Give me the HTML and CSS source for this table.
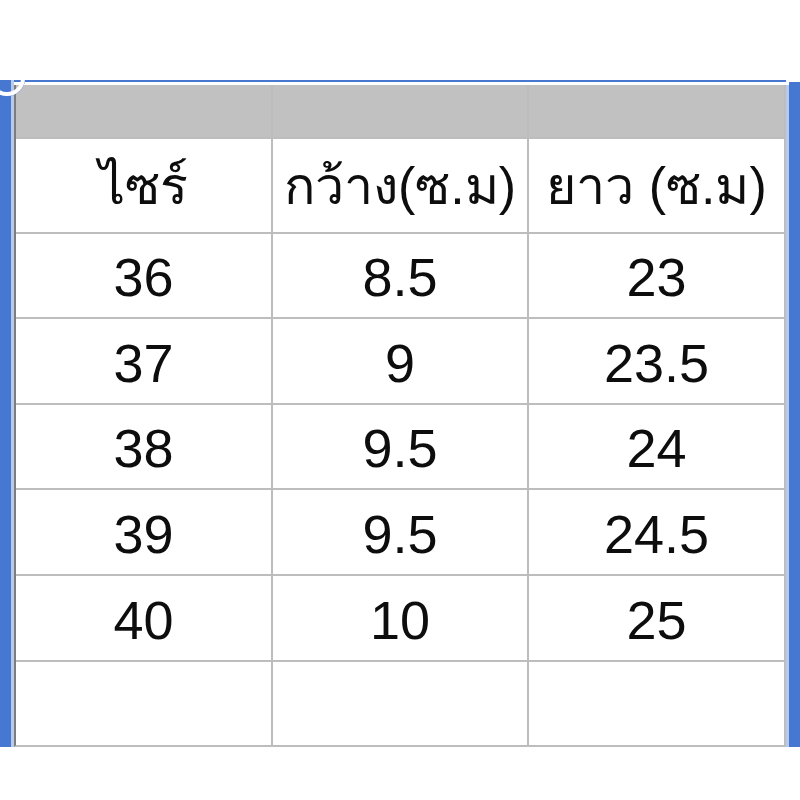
FILE: index.html
```html
<!DOCTYPE html>
<html lang="th">
<head>
<meta charset="utf-8">
<title>ตารางไซร์</title>
<link rel="stylesheet" href="styles.css">
</head>
<body>
<div class="page">
  <div class="frame">
    <div class="band band-left"></div>
    <div class="strip"></div>
    <div class="main">
      <div class="grid">
        <div class="cell head"></div>
        <div class="cell head"></div>
        <div class="cell head"></div>
        <div class="cell th">ไซร์</div>
        <div class="cell th">กว้าง(ซ.ม)</div>
        <div class="cell th">ยาว (ซ.ม)</div>
        <div class="cell">36</div>
        <div class="cell">8.5</div>
        <div class="cell">23</div>
        <div class="cell">37</div>
        <div class="cell">9</div>
        <div class="cell">23.5</div>
        <div class="cell">38</div>
        <div class="cell">9.5</div>
        <div class="cell">24</div>
        <div class="cell">39</div>
        <div class="cell">9.5</div>
        <div class="cell">24.5</div>
        <div class="cell">40</div>
        <div class="cell">10</div>
        <div class="cell">25</div>
        <div class="cell"></div>
        <div class="cell"></div>
        <div class="cell"></div>
      </div>
    </div>
    <div class="strip strip-right"></div>
    <div class="band band-right"></div>
  </div>
  <svg class="handle" width="40" height="50" viewBox="0 0 40 50">
    <defs>
      <clipPath id="below">
        <rect x="0" y="20" width="40" height="30"/>
      </clipPath>
    </defs>
    <circle cx="7" cy="18" r="17.5" fill="none" stroke="#5b87d6" stroke-width="1.5" clip-path="url(#below)"/>
    <circle cx="7" cy="18" r="16" fill="none" stroke="#ffffff" stroke-width="4"/>
  </svg>
</div>
</body>
</html>
```

FILE: styles.css
```css
html, body {
  margin: 0;
  padding: 0;
  background: #ffffff;
}

.page {
  position: relative;
  width: 800px;
  height: 800px;
  padding-top: 80px;
  box-sizing: border-box;
  overflow: hidden;
  font-family: "Liberation Sans", Arial, "DejaVu Sans", sans-serif;
}

.frame {
  display: flex;
  height: 667px;
}

.band {
  width: 11px;
  background: #4778d1;
}

.band-right {
  margin-top: 2px;
}

.strip {
  width: 3px;
  background: #b7caee;
}

.strip-right {
  margin-top: 5px;
}

.main {
  width: 772px;
  border-top: 2px solid #4778d1;
  padding-top: 3px;
  background: #ffffff;
}

.grid {
  display: grid;
  grid-template-columns: 255px 254px 255px;
  grid-template-rows: 52px 93px 83px 84px 83px 84px 84px 83px;
  gap: 2px;
  background: #bdbdbd;
  border: 2px solid #bdbdbd;
  border-top: none;
  border-left-color: #7d7d7d;
}

.cell {
  background: #ffffff;
  display: flex;
  align-items: center;
  justify-content: center;
  font-size: 54px;
  color: #0d0d0d;
  padding-top: 3px;
  box-sizing: border-box;
}

.cell.head {
  background: #c1c1c1;
}

.cell.th {
  padding-top: 0;
  font-size: 52px;
}

.handle {
  position: absolute;
  left: 0;
  top: 60px;
}
```
